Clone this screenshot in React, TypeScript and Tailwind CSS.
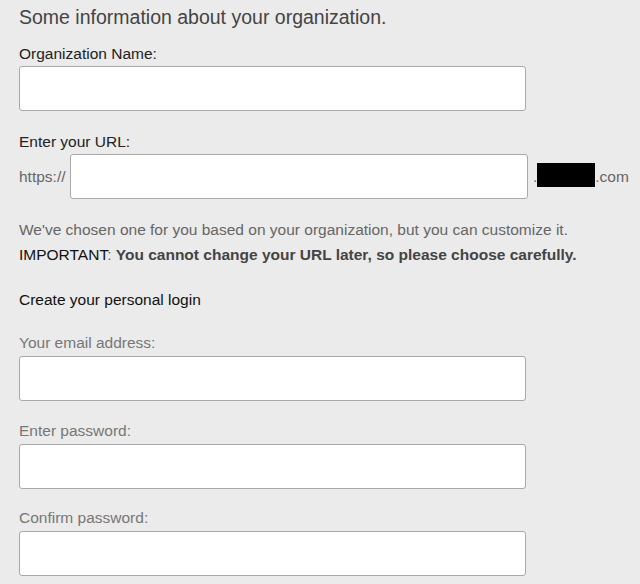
export default function App() {
  const inputCls =
    "block w-[507px] h-[45px] bg-white border border-[#a9a9a9] rounded-[3px] outline-none";
  return (
    <div className="min-h-[584px] w-[640px] bg-[#ebebeb] pl-[19px] pt-[5px] font-['Liberation_Sans',Arial,sans-serif] text-[15.5px] text-[#222]">
      <h1 className="text-[19.5px] leading-[24px] text-[#444]">Some information about your organization.</h1>

      <label className="block mt-[16px] leading-[18px]">Organization Name:</label>
      <input className={`${inputCls} mt-[3px]`} />

      <label className="block mt-[22px] leading-[18px]">Enter your URL:</label>
      <div className="flex items-center mt-[3px]">
        <span className="w-[51px] text-[#666]">https://</span>
        <input className="block w-[458px] h-[45px] bg-white border border-[#a9a9a9] rounded-[3px] outline-none" />
        <span className="ml-[5px] text-[#666]">.</span>
        <span className="w-[58px] h-[24px] mb-[4px] bg-black" />
        <span className="text-[#666]">.com</span>
      </div>

      <p className="mt-[18px] leading-[25px] text-[#666]">
        We've chosen one for you based on your organization, but you can customize it.
        <br />
        <span className="text-[#111]">IMPORTANT</span>
        <span className="text-[#666]">: </span>
        <b className="text-[#444]">You cannot change your URL later, so please choose carefully.</b>
      </p>

      <p className="mt-[24px] leading-[18px] text-[#111]">Create your personal login</p>

      <label className="block mt-[25px] leading-[18px] text-[#777]">Your email address:</label>
      <input className={`${inputCls} mt-[4px]`} />

      <label className="block mt-[21px] leading-[18px] text-[#777]">Enter password:</label>
      <input className={`${inputCls} mt-[4px]`} />

      <label className="block mt-[20px] leading-[18px] text-[#777]">Confirm password:</label>
      <input className={`${inputCls} mt-[4px]`} />
    </div>
  );
}
